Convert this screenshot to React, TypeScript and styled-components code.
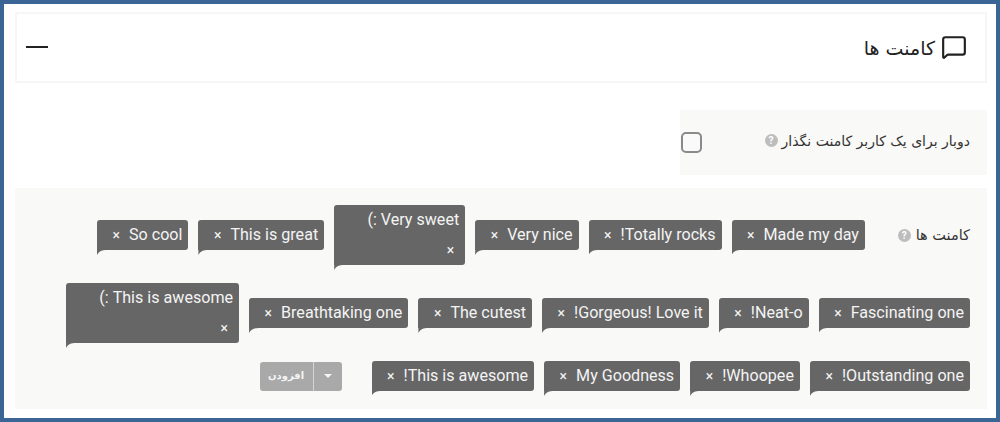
import React from "react";
import styled, { createGlobalStyle } from "styled-components";
import { MessageSquare } from "lucide-react";

const Global = createGlobalStyle`
  html, body { margin: 0; padding: 0; background: #fff; }
  * { box-sizing: border-box; }
`;

const Frame = styled.div`
  width: 1000px;
  height: 422px;
  border: 4px solid #3b6595;
  padding: 8px 9px 9px 11px;
  background: #fff;
  direction: rtl;
  font-family: "DejaVu Sans", "Noto Sans", sans-serif;
  overflow: hidden;
`;

const Card = styled.header`
  height: 71px;
  border: 2px solid #f6f6f5;
  display: flex;
  align-items: center;
  justify-content: space-between;
  padding: 0 18px 0 8px;
  margin-bottom: 27px;
`;

const Title = styled.h2`
  margin: 0;
  display: flex;
  align-items: center;
  gap: 6px;
  font-size: 19px;
  font-weight: 400;
  color: #222;
  svg { display: block; margin-top: -2px; }
`;

const Collapse = styled.span`
  display: block;
  width: 22px;
  height: 2px;
  margin: 0 0 2px 1px;
  background: #222;
`;

const OptionRow = styled.div`
  width: 307px;
  height: 65px;
  background: #f9f9f7;
  display: flex;
  align-items: center;
  justify-content: space-between;
  padding: 0 17px 0 1px;
  margin-bottom: 13px;
`;

const Label = styled.label`
  display: inline-flex;
  align-items: center;
  gap: 4px;
  font-size: 14px;
  color: #333;
  white-space: nowrap;
`;

const OptionLabel = styled(Label)`
  margin-bottom: 4px;
`;

const Help = styled.span`
  display: inline-block;
  width: 13px;
  height: 13px;
  border-radius: 50%;
  background: #bdbdbd;
  color: #fff;
  font: 700 10px/13px "Roboto", sans-serif;
  text-align: center;
  direction: ltr;
`;

const Check = styled.span`
  display: block;
  width: 21px;
  height: 21px;
  border: 2px solid #8a8a8a;
  border-radius: 5px;
  background: #fafafa;
`;

const Section = styled.section`
  height: 221px;
  background: #f9f9f7;
  padding: 17px 17px 0 0;
`;

const Tags = styled.div`
  display: flex;
  flex-wrap: wrap;
  align-items: center;
  gap: 18px 10px;
`;

const FieldLabel = styled(Label)`
  width: 95px;
  font-size: 14.5px;
  gap: 5px;
`;

const Tag = styled.span<{ $width?: number }>`
  position: relative;
  display: inline-flex;
  flex-wrap: ${(p) => (p.$width ? "wrap" : "nowrap")};
  align-items: center;
  gap: 0 9px;
  width: ${(p) => (p.$width ? `${p.$width}px` : "auto")};
  min-height: 30px;
  padding: 0 6px 0 15.5px;
  background: #666;
  border-radius: 3px;
  border-bottom-left-radius: 0;
  color: #f4f4f4;
  font: 400 16.1px/30px "Roboto", sans-serif;
  white-space: nowrap;

  &::after {
    content: "";
    position: absolute;
    left: 0;
    top: 100%;
    width: 10px;
    height: 5px;
    background: #666;
    clip-path: path("M0 0 H10 C5 0 2 1 0 5 Z");
  }
`;

const TagText = styled.span<{ $stacked: boolean }>`
  flex-basis: ${(p) => (p.$stacked ? "100%" : "auto")};
`;

const Remove = styled.span<{ $stacked: boolean }>`
  font-size: 14px;
  line-height: 30px;
  padding-right: ${(p) => (p.$stacked ? "5px" : "0")};
`;

const SplitButton = styled.div`
  display: inline-flex;
  height: 29px;
  margin-right: 20px;
  background: #a9a9a9;
  border-radius: 3px;
  color: #f4f4f4;
  overflow: hidden;
`;

const Caret = styled.span`
  width: 29px;
  display: flex;
  align-items: center;
  justify-content: center;
  border-left: 1px solid #d5d5d5;
  &::before {
    content: "";
    border: 4px solid transparent;
    border-top-color: #f4f4f4;
    border-bottom-width: 0;
  }
`;

const AddLabel = styled.span`
  width: 53px;
  text-align: center;
  font-size: 10px;
  font-weight: 700;
  line-height: 27px;
`;

const rows: { text: string; width?: number }[] = [
  { text: "Made my day" },
  { text: "Totally rocks!" },
  { text: "Very nice" },
  { text: "Very sweet :)", width: 131 },
  { text: "This is great" },
  { text: "So cool" },
  { text: "Fascinating one" },
  { text: "Neat-o!" },
  { text: "Gorgeous! Love it!" },
  { text: "The cutest" },
  { text: "Breathtaking one" },
  { text: "This is awesome :)", width: 173 },
  { text: "Outstanding one!" },
  { text: "Whoopee!" },
  { text: "My Goodness" },
  { text: "This is awesome!" },
];

export default function App() {
  return (
    <Frame dir="rtl">
      <Global />
      <Card>
        <Title>
          <MessageSquare size={26} strokeWidth={2} color="#222" />
          کامنت ها
        </Title>
        <Collapse />
      </Card>
      <OptionRow>
        <OptionLabel>
          دوبار برای یک کاربر کامنت نگذار
          <Help>?</Help>
        </OptionLabel>
        <Check />
      </OptionRow>
      <Section>
        <Tags>
          <FieldLabel>
            کامنت ها
            <Help>?</Help>
          </FieldLabel>
          {rows.map((r) => (
            <Tag key={r.text} $width={r.width}>
              <TagText $stacked={!!r.width}>{r.text}</TagText>
              <Remove $stacked={!!r.width}>×</Remove>
            </Tag>
          ))}
          <SplitButton>
            <Caret />
            <AddLabel>افزودن</AddLabel>
          </SplitButton>
        </Tags>
      </Section>
    </Frame>
  );
}
